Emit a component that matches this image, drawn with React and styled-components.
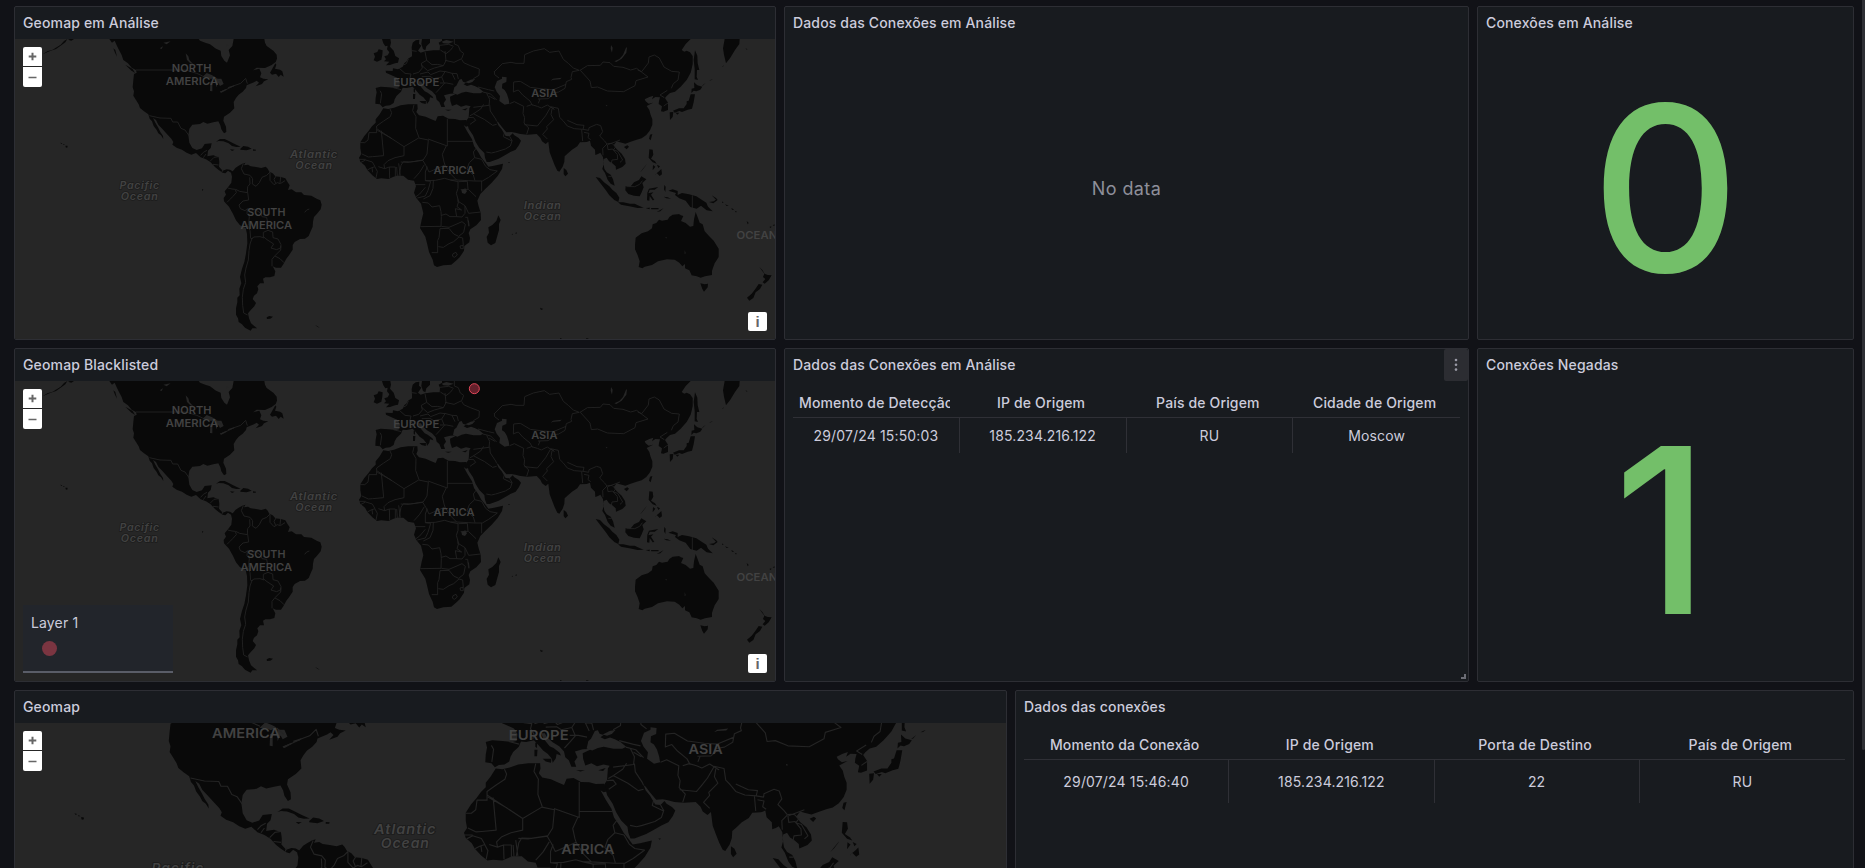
import React from "react";
import styled, { createGlobalStyle } from "styled-components";

const GlobalStyle = createGlobalStyle`
  * { box-sizing: border-box; }
  html, body { margin: 0; background: #111217; }
  body {
    font-family: Inter, "Liberation Sans", sans-serif;
    font-size: 14px;
    line-height: 22px;
    letter-spacing: 0.01071em;
    color: #ccccdc;
    overflow: hidden;
  }
`;

const Viewport = styled.main`
  display: grid;
  grid-template-columns: 1fr 3px;
  height: 868px;
  overflow: hidden;
`;

const Dashboard = styled.div`
  display: flex;
  flex-direction: column;
  gap: 8px;
  padding: 6px 8px 0 14px;
`;

const PanelRow = styled.section`
  display: grid;
  grid-template-columns: ${(p) => p.$columns};
  column-gap: 8px;
  height: 334px;
  flex: none;
`;

const ScrollThumb = styled.div`
  height: 750px;
  background: #2e2f34;
  border-radius: 0 0 3px 3px;
`;

const PanelFrame = styled.article`
  position: relative;
  display: flex;
  flex-direction: column;
  min-width: 0;
  background: #181b1f;
  border: 1px solid #2d2e34;
  border-radius: 2px;
  overflow: hidden;
`;

const PanelHeader = styled.header`
  display: flex;
  align-items: center;
  justify-content: space-between;
  height: 32px;
  flex: none;
  padding-left: 8px;
`;

const PanelTitle = styled.h2`
  margin: 0;
  font-size: 14px;
  font-weight: 500;
  line-height: 22px;
`;

const MenuButton = styled.button`
  display: grid;
  place-items: center;
  width: 24px;
  height: 32px;
  padding: 0;
  border: 0;
  border-radius: 2px;
  background: #2c2d32;
  color: #9a9aa6;
`;

const ResizeHandle = styled.span`
  position: absolute;
  right: 2px;
  bottom: 2px;
  width: 5px;
  height: 5px;
  border-right: 2px solid #6c6d75;
  border-bottom: 2px solid #6c6d75;
`;

const MapArea = styled.div`
  position: relative;
  height: 300px;
  background: #262626;
`;

const MapSvg = styled.svg`
  display: block;
  width: 100%;
  height: 300px;
`;

const ZoomControl = styled.div`
  position: absolute;
  top: 8px;
  left: 8px;
  display: grid;
  gap: 1px;
  width: 19px;
`;

const MapButton = styled.button`
  display: grid;
  place-items: center;
  width: 19px;
  height: ${(p) => p.$height || 19}px;
  padding: 0;
  border: 0;
  border-radius: ${(p) => p.$radius || "2px"};
  background: #fff;
  color: #666;
  font: 700 15px "Liberation Sans", Arial, sans-serif;
`;

const InfoControl = styled.div`
  position: absolute;
  right: 8px;
  bottom: 8px;
`;

const Legend = styled.div`
  position: absolute;
  left: 8px;
  bottom: 8px;
  width: 150px;
  height: 68px;
  padding: 7px 8px;
  background: #22252b;
  border-bottom: 2px solid #5a5d68;
`;

const LegendSwatch = styled.div`
  width: 15px;
  height: 15px;
  margin: 7px 0 0 11px;
  border-radius: 50%;
  background: #7b3541;
`;

const Centered = styled.div`
  display: flex;
  flex: 1;
  align-items: center;
  justify-content: center;
  min-height: 0;
`;

const NoData = styled.span`
  font-size: 18px;
  letter-spacing: 0.022em;
  color: #8e8f9a;
`;

const StatValue = styled.span`
  padding: 0 ${(p) => (p.$narrow ? 8 : 0)}px 2px 0;
  font-size: 230.8px;
  font-weight: 500;
  line-height: 1.2;
  letter-spacing: 0;
  color: #73bf69;
`;

const Table = styled.div`
  margin: 0 8px;
`;

const TableRow = styled.div`
  display: grid;
  grid-template-columns: repeat(4, 1fr);
  height: ${(p) => p.$height}px;
  border-bottom: ${(p) => (p.$head ? "1px solid #2f3036" : "0")};
`;

const HeadCell = styled.div`
  display: flex;
  align-items: center;
  min-width: 0;
  padding: 8px 10px 0 6px;
  font-weight: 500;
`;

const HeadLabel = styled.div`
  width: 100%;
  overflow: hidden;
  white-space: nowrap;
  text-align: ${(p) => (p.$long ? "left" : "center")};
`;

const Cell = styled.div`
  display: flex;
  align-items: center;
  justify-content: center;
  min-width: 0;
  border-right: 1px solid #2f3036;
  &:last-child { border-right: 0; }
`;

const LAND_WEST = [
  // North and Central America
  "M328,117 L336,128 L344,122 L350,136 L357,150 L365,165 L370,180 L384,190 L395,203 L408,210 L410,218 L402,222 L400,240 L398,262 L402,274 L400,287 L408,300 L416,313 L420,324 L432,334 L445,343 L449,356 L456,364 L461,378 L470,390 L475,400 L483,406 L490,417 L489,408 L481,396 L474,382 L466,368 L459,354 L468,360 L475,374 L488,388 L500,401 L514,416 L520,426 L517,434 L530,443 L546,449 L560,458 L574,464 L588,459 L602,472 L618,478 L632,487 L645,501 L656,510 L668,518 L676,520 L684,512 L693,518 L696,530 L700,515 L690,509 L680,508 L668,512 L657,500 L658,486 L656,472 L640,466 L622,469 L624,452 L632,444 L635,430 L614,432 L606,445 L590,450 L577,444 L568,428 L565,405 L568,386 L577,374 L600,372 L610,366 L622,371 L640,367 L655,364 L661,376 L664,388 L672,400 L679,396 L678,380 L670,362 L672,350 L690,338 L703,325 L701,306 L708,294 L716,284 L728,275 L738,264 L740,256 L762,247 L770,242 L777,248 L767,259 L786,252 L792,244 L805,238 L790,236 L780,232 L784,220 L778,206 L755,212 L742,226 L752,216 L770,203 L795,204 L815,195 L827,186 L831,176 L830,164 L820,152 L800,138 L795,128 L793,117 L701,117 L697,138 L686,150 L690,166 L681,188 L673,182 L664,168 L662,152 L648,146 L630,133 L618,129 L600,122 L596,117 Z",
  "M810,218 L816,208 L826,190 L829,194 L825,206 L840,209 L847,214 L851,230 L842,224 L836,231 L828,221 L816,224 Z",
  "M376,194 L388,201 L398,207 L405,219 L393,211 Z",
  "M128,163 L142,154 L158,149 L170,142 L182,134 L192,123 L202,117 L196,127 L184,136 L168,147 L150,153 Z M204,119 L210,117 L222,117 L214,122 Z",
  "M340,145 L346,150 L351,170 L344,156 Z",
  // Caribbean
  "M648,425 L660,417 L674,417 L688,424 L704,432 L722,440 L709,441 L696,438 L686,430 L670,424 L656,423 Z M721,446 L730,438 L744,440 L755,446 L740,451 L721,449 Z M690,448 L704,449 L696,453 Z M759,448 L768,449 L767,452 L759,452 Z",
  // South America
  "M696,530 L697,515 L707,503 L716,497 L727,491 L736,488 L732,496 L744,494 L752,499 L768,501 L784,504 L797,500 L802,505 L808,515 L818,520 L826,529 L842,531 L856,535 L862,545 L869,556 L864,570 L875,568 L888,577 L904,577 L912,585 L934,587 L950,596 L961,601 L965,614 L962,628 L951,641 L942,651 L939,665 L938,680 L932,694 L926,708 L915,716 L900,717 L884,726 L878,735 L878,749 L868,764 L859,776 L850,793 L843,803 L828,803 L818,799 L826,814 L823,828 L810,832 L796,832 L789,836 L792,850 L780,850 L772,859 L775,868 L771,880 L762,887 L758,897 L768,909 L763,919 L753,929 L744,940 L747,955 L753,970 L771,985 L757,985 L752,992 L735,983 L726,973 L716,966 L714,955 L708,944 L708,925 L712,907 L712,893 L719,886 L718,866 L724,850 L720,831 L726,806 L733,786 L738,760 L742,730 L741,702 L737,684 L720,676 L708,661 L698,640 L687,620 L672,604 L671,594 L678,584 L674,574 L684,562 L694,548 Z",
  "M800,952 L808,948 L819,950 L811,956 L801,957 Z M945,976 L952,978 L959,984 Z",
  "M196,437 L202,437 L203,442 L198,443 Z M181,428 L187,430 L184,432 Z M190,432 L195,435 L190,435 Z M606,567 L610,569 L607,573 Z",
];

const LAND_EAST = [
  // British Isles
  "M126,117 L130,130 L136,139 L143,137 L141,148 L148,157 L143,166 L133,169 L138,178 L132,184 L148,185 L138,196 L150,195 L165,190 L174,188 L177,175 L166,168 L161,152 L150,140 L153,128 L151,117 Z M101,181 L105,170 L101,160 L112,156 L116,148 L128,151 L127,164 L124,179 L111,185 Z",
  // Eurasia
  "M128,322 L120,313 L106,311 L107,293 L110,277 L107,264 L122,260 L145,262 L168,264 L178,262 L180,246 L172,233 L158,227 L138,218 L137,212 L158,213 L159,205 L174,208 L188,200 L193,190 L200,184 L204,176 L216,169 L216,157 L215,142 L218,128 L227,121 L238,119 L237,131 L244,137 L234,152 L242,158 L256,154 L280,151 L299,151 L300,137 L296,128 L306,122 L306,117 L1052,117 L1037,132 L1025,150 L1033,155 L1040,152 L1050,157 L1058,168 L1058,193 L1052,218 L1040,240 L1022,260 L1005,275 L990,279 L980,288 L975,294 L984,308 L984,330 L970,335 L963,334 L966,319 L956,312 L957,303 L960,292 L946,291 L936,298 L940,287 L928,291 L914,298 L917,304 L926,311 L939,308 L920,318 L928,330 L932,345 L937,358 L937,374 L930,391 L919,405 L905,415 L890,419 L872,425 L856,431 L840,427 L830,424 L821,436 L830,448 L845,461 L855,477 L857,491 L847,501 L835,506 L828,509 L827,499 L817,490 L807,484 L800,473 L791,477 L790,488 L793,506 L800,517 L812,524 L819,538 L824,557 L812,551 L803,539 L795,519 L787,507 L791,492 L789,471 L781,458 L774,462 L766,465 L765,449 L753,437 L750,422 L740,426 L720,427 L712,439 L696,449 L684,460 L674,469 L673,485 L668,500 L658,515 L652,512 L644,496 L637,478 L629,457 L625,425 L617,432 L606,424 L601,413 L590,402 L563,404 L541,402 L526,398 L514,396 L499,397 L484,379 L475,367 L470,363 L475,376 L485,388 L492,400 L497,408 L509,409 L518,400 L523,406 L536,414 L543,422 L537,435 L527,449 L511,456 L496,465 L476,476 L449,486 L440,486 L435,473 L433,459 L418,444 L407,426 L399,406 L386,386 L384,378 L379,363 L386,352 L388,325 L392,319 L378,316 L363,320 L350,313 L336,318 L331,303 L330,290 L352,280 L330,281 L312,286 L318,299 L311,309 L315,321 L304,321 L298,306 L290,299 L287,286 L276,274 L261,265 L248,253 L243,244 L234,244 L240,257 L254,274 L263,278 L277,289 L280,295 L270,292 L268,302 L261,312 L259,303 L250,292 L239,284 L228,271 L218,260 L200,264 L188,263 L183,275 L170,287 L164,298 L161,309 L150,316 L137,317 Z",
  "M246,117 L270,117 L270,128 L259,139 L256,151 L249,147 L244,131 Z",
  "M238,303 L258,303 L257,312 L245,309 Z M219,282 L226,282 L225,297 L219,297 Z M221,266 L225,266 L225,278 L221,275 Z M315,329 L335,329 L325,332 Z M366,329 L383,324 L377,331 Z",
  // Africa and Madagascar
  "M130,325 L145,327 L162,323 L182,316 L205,313 L232,313 L233,326 L229,336 L237,346 L257,350 L272,357 L287,363 L293,349 L309,347 L326,356 L345,357 L360,361 L379,360 L385,378 L378,380 L371,375 L383,397 L396,418 L402,438 L415,457 L424,473 L437,489 L445,500 L462,497 L489,491 L486,507 L473,528 L455,548 L435,568 L421,582 L412,602 L416,619 L422,638 L423,660 L409,676 L391,688 L386,699 L390,714 L388,727 L373,738 L372,752 L359,772 L348,782 L334,794 L310,796 L291,801 L282,796 L278,779 L267,756 L261,730 L256,710 L240,684 L245,659 L250,640 L243,611 L229,594 L222,578 L228,558 L222,542 L204,539 L190,527 L168,527 L145,537 L124,535 L111,537 L97,526 L82,510 L75,497 L61,485 L57,473 L64,462 L61,445 L61,427 L73,408 L85,394 L96,379 L107,368 L107,358 L118,344 Z",
  "M475,646 L482,660 L477,672 L477,690 L466,729 L453,736 L443,728 L440,711 L447,698 L445,682 L457,675 L469,663 Z",
  "M671,504 L679,510 L684,521 L676,529 L671,522 Z",
  // South-east Asia
  "M767,531 L780,534 L792,547 L808,559 L817,569 L829,579 L838,593 L835,606 L823,600 L808,586 L797,570 L783,552 Z M834,607 L850,607 L870,611 L884,611 L900,619 L911,623 L893,624 L868,619 L843,614 Z M857,558 L871,560 L882,547 L897,540 L904,529 L919,538 L907,549 L911,562 L905,577 L899,589 L882,587 L865,582 L856,571 Z",
  "M955,561 L944,569 L929,569 L925,580 L940,577 L933,584 L943,600 L938,601 L929,588 L928,602 L921,601 L922,578 L927,566 Z M917,624 L930,623 L928,628 Z M933,624 L956,624 L955,628 L934,628 Z M950,636 L970,625 L961,634 Z",
  "M928,448 L938,449 L940,464 L933,476 L945,484 L950,491 L938,487 L926,473 Z M951,494 L960,499 L955,504 Z M939,495 L946,500 L938,511 Z M946,523 L957,514 L964,507 L966,523 L959,528 L950,519 L944,526 Z M899,518 L918,495 L920,493 L909,508 Z M927,416 L930,404 L937,402 L932,421 Z M852,441 L862,436 L867,440 L860,448 Z M973,555 L977,560 L976,576 L972,568 Z M971,590 L983,592 L993,596 L979,595 Z",
  "M985,572 L998,568 L1013,573 L1013,585 L1026,579 L1047,583 L1069,589 L1086,600 L1099,608 L1104,620 L1118,634 L1100,631 L1083,617 L1070,626 L1051,621 L1037,602 L1018,595 L1005,585 L1008,579 Z M1107,606 L1122,604 L1130,596 L1132,601 L1120,610 Z M1115,586 L1128,594 L1133,600 L1126,597 Z M1146,604 L1151,608 L1147,609 Z M1155,613 L1166,617 L1160,618 Z M1174,624 L1183,629 L1176,629 Z M1184,632 L1192,636 L1187,637 Z M1220,663 L1226,669 L1223,673 Z M1288,681 L1294,679 L1293,684 Z M1298,676 L1304,673 L1303,678 Z",
  // Japan and the Russian Pacific coast
  "M989,337 L1000,336 L998,351 L990,360 Z M999,332 L1017,325 L1031,325 L1040,312 L1040,304 L1046,302 L1052,283 L1065,283 L1061,307 L1056,326 L1043,329 L1026,336 L1018,333 L1004,338 Z M1007,338 L1018,338 L1012,344 Z M1054,279 L1055,266 L1063,264 L1062,247 L1072,256 L1087,260 L1081,269 L1069,274 L1061,272 Z M1065,151 L1072,167 L1073,190 L1078,210 L1071,210 L1070,230 L1074,240 L1064,238 L1064,207 L1061,180 Z M1154,117 L1149,145 L1152,164 L1158,190 L1171,173 L1185,150 L1198,132 L1199,117 Z M1085,258 L1097,248 L1090,256 Z M1107,242 L1119,236 L1113,241 Z M1147,200 L1151,195 L1149,200 Z",
  // Oceania
  "M885,735 L887,713 L905,700 L924,694 L936,685 L938,673 L949,669 L957,659 L966,662 L983,659 L988,651 L998,644 L1013,643 L1030,648 L1023,663 L1037,669 L1050,680 L1060,678 L1062,658 L1067,636 L1073,652 L1079,668 L1088,673 L1094,694 L1107,708 L1121,722 L1136,746 L1136,771 L1124,790 L1116,812 L1116,825 L1095,829 L1082,833 L1070,829 L1055,826 L1048,811 L1035,805 L1035,792 L1027,799 L1018,788 L1004,779 L981,778 L954,784 L936,795 L914,800 L907,805 L896,801 L899,784 L893,766 L885,748 Z",
  "M1081,850 L1094,853 L1104,851 L1103,862 L1092,875 L1087,867 Z M1258,801 L1267,810 L1274,821 L1283,825 L1295,826 L1286,841 L1274,851 L1268,847 L1276,837 L1269,831 L1273,821 Z M1256,852 L1267,854 L1260,867 L1247,877 L1240,894 L1228,902 L1221,893 L1235,881 L1246,867 Z M600,923 L610,927 L603,930 Z M1015,642 L1022,645 L1014,646 Z",
  "M525,700 L530,697 L530,701 Z M515,703 L519,701 L517,705 Z M504,486 L510,486 L507,489 Z M1218,145 L1223,150 L1217,147 Z M660,1014 L667,1015 L660,1017 Z M738,1014 L747,1015 L740,1017 Z",
];

const WATER_WEST =
  "M606,232 L620,219 L635,225 L646,231 L633,237 L620,232 Z M631,246 L637,244 L637,274 L630,273 Z M648,236 L664,236 L671,252 L660,258 L655,249 L648,262 Z M659,275 L678,267 L681,269 L664,278 Z M683,262 L704,255 L700,260 L686,264 Z M557,160 L565,169 L568,180 L580,193 L571,190 L561,180 Z M490,128 L512,124 L500,133 Z M479,145 L489,139 L485,147 Z M678,135 L683,132 L686,136 L680,139 Z";

const WATER_EAST =
  "M339,279 L343,262 L349,257 L358,239 L365,237 L369,245 L378,248 L371,253 L381,258 L393,254 L404,258 L417,264 L430,275 L421,280 L401,280 L378,275 L365,278 L352,284 Z M376,247 L392,239 L406,236 L397,246 L386,250 Z M464,262 L471,243 L486,236 L486,230 L500,232 L499,246 L487,251 L486,265 L494,270 L501,282 L506,298 L508,311 L494,314 L478,303 L480,288 L470,275 Z M823,184 L838,177 L849,165 L858,143 L861,142 L859,158 L845,176 L829,186 Z M813,135 L818,143 L816,158 L812,146 Z M632,242 L639,236 L665,233 L660,238 L640,239 Z M305,125 L319,120 L341,125 L325,131 L310,130 Z M364,570 L376,565 L381,574 L375,582 L366,579 Z M383,659 L387,663 L389,681 L386,674 Z M351,588 L356,608 L353,606 Z M1034,750 L1037,760 L1034,762 Z M976,710 L982,714 L978,715 Z M797,314 L803,317 L799,319 Z";

const BORDERS_WEST =
  "M408,210 H557 L590,220 L608,228 M646,232 L662,246 M661,276 L684,266 L705,256 L722,250 L737,235 L742,251 M448,347 L480,354 L513,355 L518,366 L533,366 L543,385 L555,390 L567,407 M602,466 L610,457 L621,451 M610,473 L618,462 M630,484 L642,472 L656,470 M639,493 L656,495 M666,516 L669,507 M730,491 L724,506 L732,522 L750,526 L758,536 L757,552 L768,559 L778,548 L786,532 L800,526 L810,516 M810,517 L810,541 L822,554 L832,548 L841,551 L855,542 M828,528 L822,538 L827,550 M842,530 L840,549 M683,564 L696,567 L706,568 L709,578 L699,589 L690,598 L681,607 M707,568 L719,574 L742,578 L743,560 L750,552 L749,532 M743,577 L746,600 L729,603 L717,615 L721,626 L735,632 L742,626 L741,641 L748,650 L746,670 L741,684 M743,627 L765,628 L781,639 L786,650 L800,652 L803,668 M745,679 L750,691 L752,715 L757,716 L761,711 L780,710 L790,713 M790,715 L790,697 L804,691 L818,696 L819,713 L834,717 L843,734 L841,744 L830,749 L813,744 L821,732 L801,719 L790,710 M843,737 L842,750 L825,767 L816,778 L816,799 M825,768 L840,776 L852,788 M757,713 L750,732 L747,752 L745,780 L738,804 L734,825 L737,847 L730,868 L727,892 L728,916 L731,939 L743,945 M914,637 L920,630 L928,627";

const BORDERS_EAST =
  "M120,272 L125,281 L121,310 M160,263 L184,269 M178,205 L195,220 L213,222 L210,234 L218,246 L215,258 M205,177 L199,191 L190,195 M216,152 L230,154 M255,155 L260,181 L244,190 L247,204 L236,217 L219,222 M260,181 L276,194 L292,193 L310,197 L318,182 L315,153 M244,195 L263,212 L283,204 L310,197 M240,222 L264,216 L272,224 L300,213 L315,215 L305,231 L281,236 L270,229 L245,230 M305,231 L313,250 L300,265 L288,278 M340,253 L320,249 L300,249 M345,239 L336,220 L314,214 M336,220 L351,221 L355,237 M315,181 L342,187 L365,176 L371,160 L361,153 L355,137 L343,132 L343,117 M299,136 L326,133 L341,139 M301,150 L318,161 L331,151 L338,142 M365,178 L371,188 L391,197 L418,207 L417,226 L400,236 M414,261 L445,269 L463,273 M429,276 L452,282 L470,300 M440,280 L449,298 L447,316 L400,322 M447,288 L465,298 M449,314 L451,333 L467,357 L470,364 M389,348 L401,341 L422,327 L431,313 M400,341 L434,359 L458,376 L470,373 M385,353 L400,352 L407,361 L390,373 M493,399 L490,410 L516,423 L511,438 L496,447 L467,456 L454,459 L439,456 M509,409 L517,423 M509,311 L523,305 L551,319 L549,341 L554,353 L552,369 L566,384 L560,403 M553,374 L592,378 L605,362 L617,347 L632,321 L643,328 L622,315 L604,324 L592,319 L575,314 L560,319 M464,214 L487,191 L513,187 L528,190 L552,190 L554,164 L580,153 L613,146 L629,157 L657,153 L670,178 L685,190 L700,204 L718,211 L697,215 L693,232 L695,238 L679,245 L675,265 L656,276 L637,279 M463,213 L464,224 L477,234 M520,277 L521,246 L541,244 L571,262 L610,267 L640,269 L678,253 M521,275 L535,270 L548,285 L570,303 L577,316 M594,297 L625,296 L638,285 M595,310 L600,297 M632,320 L655,325 L659,352 L669,362 L682,378 L703,386 L729,388 L732,376 L711,374 L682,361 M636,326 L633,344 L641,359 L620,380 L622,387 L608,403 L622,417 M729,388 L746,391 L747,383 L770,373 L782,377 L788,395 L779,408 L793,422 L801,432 L788,445 L789,466 M725,389 L728,423 M732,397 L747,400 L744,413 L752,419 M720,211 L742,197 L781,196 L789,186 L810,188 L821,199 L849,202 L872,210 L890,205 L924,231 L888,242 L885,257 L851,275 L802,273 L773,261 L754,263 L750,243 L721,211 M893,210 L905,215 L925,189 L927,171 L943,165 L958,174 L972,201 L995,214 L1018,216 L1014,240 L1000,251 L994,265 M973,293 L960,285 L982,271 M971,318 L984,309 M802,431 L816,430 L827,441 L820,450 L833,454 L848,480 L840,487 M803,434 L822,427 L840,420 M802,434 L804,449 L818,447 L832,464 L833,478 L816,480 L814,490 M805,529 L815,529 M859,560 L884,560 L899,553 L907,542 M1057,586 V624 M150,327 L155,338 L151,350 L131,363 L110,378 L110,386 L192,440 L236,414 L265,420 L261,462 L249,481 L212,486 L190,485 L183,496 L177,528 M110,387 V398 L87,398 L84,420 L74,428 L60,428 M124,392 L131,467 L98,470 L85,471 L66,462 M112,391 L156,416 M192,441 V467 L165,473 M165,473 L144,482 L132,494 L134,506 M222,314 L218,332 L228,350 L227,385 L237,413 M290,362 M322,356 V438 L264,417 M322,424 H399 M319,437 L307,463 L312,486 L315,495 L281,510 L267,516 L258,497 L249,482 M315,495 L331,521 L350,540 L385,542 L405,543 L427,543 L446,532 L472,513 L450,509 L437,499 L425,478 L404,473 L388,488 L381,507 L400,525 L405,542 M404,473 L400,456 L409,444 M350,540 L331,540 L314,535 L286,541 L256,542 L256,516 L262,500 M256,542 L272,544 L264,571 L256,588 L232,594 M225,554 H256 M247,607 L265,609 L276,621 L299,617 L303,635 L304,650 L303,679 L241,680 M280,541 L279,565 L270,587 L250,597 M331,540 L354,545 L354,565 L349,580 L356,604 L351,620 L365,630 L346,626 L350,650 L330,650 L318,642 L304,646 M355,545 L382,544 L384,568 L362,569 M385,568 L408,590 M425,543 V574 M356,605 L375,617 L386,640 L422,636 M375,618 V640 L366,651 L350,650 M304,679 L327,682 L348,673 L366,665 L376,673 L371,697 L356,709 L341,702 L327,685 L300,686 L297,713 L293,722 V758 L275,758 M295,740 L310,742 L327,731 L341,725 L357,711 L368,714 L370,737 M376,652 L383,652 L386,679 M339,761 L348,757 L352,765 L343,772 L337,768 Z M360,738 L369,736 L370,746 L362,746 Z M57,478 L77,478 M63,487 L77,480 L97,486 L105,500 L93,504 L82,510 M96,503 L98,517 M105,501 L112,514 L108,534 M115,500 L134,506 L148,501 L149,534 M148,501 H166 V529 M170,501 L172,528 M176,490 L181,527 M182,486 L204,487 L249,480 M222,536 L239,517 L253,494 M228,590 L239,582 L256,562";

const CountryLabel = ({ x, y, width, children }) => (
  <text x={x} y={y} textLength={width} lengthAdjust="spacingAndGlyphs" textAnchor="middle"
    fontFamily="Inter, sans-serif" fontWeight="600" fontSize="31" fill="#424242">{children}</text>
);

const OceanLabel = ({ x, y, width, children }) => (
  <text x={x} y={y} textLength={width} lengthAdjust="spacingAndGlyphs" textAnchor="middle"
    fontFamily="Inter, sans-serif" fontStyle="italic" fontWeight="600" fontSize="31" letterSpacing="2"
    fill="#424242" stroke="#1b1b1b" strokeWidth="4" paintOrder="stroke">{children}</text>
);

const WorldMap = ({ viewBox, marker }) => (
  <MapSvg viewBox={viewBox} preserveAspectRatio="xMinYMin slice">
    <g fill="#090909">
      {LAND_WEST.map((d) => <path key={d} d={d} />)}
    </g>
    <path d={WATER_WEST} fill="#262626" />
    <path d={BORDERS_WEST} fill="none" stroke="#242424" strokeWidth="2.6" strokeLinejoin="round" />
    <g transform="translate(1020 0)">
      <g fill="#090909">
        {LAND_EAST.map((d) => <path key={d} d={d} />)}
      </g>
      <path d={WATER_EAST} fill="#262626" />
      <path d={BORDERS_EAST} fill="none" stroke="#242424" strokeWidth="2.6" strokeLinejoin="round" />
    </g>
    <CountryLabel x="575" y="217" width="119">NORTH</CountryLabel>
    <CountryLabel x="576" y="255" width="157">AMERICA</CountryLabel>
    <CountryLabel x="799" y="648" width="115">SOUTH</CountryLabel>
    <CountryLabel x="799" y="686" width="155">AMERICA</CountryLabel>
    <CountryLabel x="1249" y="259" width="138">EUROPE</CountryLabel>
    <CountryLabel x="1633" y="291" width="79">ASIA</CountryLabel>
    <CountryLabel x="1362" y="521" width="123">AFRICA</CountryLabel>
    <CountryLabel x="2288" y="718" width="157">OCEANIA</CountryLabel>
    <OceanLabel x="419" y="566" width="121">Pacific</OceanLabel>
    <OceanLabel x="419" y="600" width="113">Ocean</OceanLabel>
    <OceanLabel x="942" y="475" width="144">Atlantic</OceanLabel>
    <OceanLabel x="942" y="508" width="113">Ocean</OceanLabel>
    <OceanLabel x="1628" y="627" width="114">Indian</OceanLabel>
    <OceanLabel x="1628" y="660" width="113">Ocean</OceanLabel>
    {marker && <circle cx={marker.x} cy={marker.y} r="15" fill="#64202b" stroke="#e04759" strokeWidth="3" />}
  </MapSvg>
);

const Panel = ({ title, menu, children }) => (
  <PanelFrame>
    <PanelHeader>
      <PanelTitle>{title}</PanelTitle>
      {menu && (
        <MenuButton aria-label="Menu">
          <svg width="4" height="14" viewBox="0 0 4 14" fill="currentColor">
            <circle cx="2" cy="2" r="1.3" />
            <circle cx="2" cy="6.8" r="1.3" />
            <circle cx="2" cy="11.6" r="1.3" />
          </svg>
        </MenuButton>
      )}
    </PanelHeader>
    {children}
    {menu && <ResizeHandle />}
  </PanelFrame>
);

const GeomapPanel = ({ title, viewBox = "45 117 2280 900", marker, legend }) => (
  <Panel title={title}>
    <MapArea>
      <WorldMap viewBox={viewBox} marker={marker} />
      <ZoomControl>
        <MapButton $radius="2px 2px 0 0" aria-label="Zoom in">
          <svg width="9" height="9" viewBox="0 0 9 9" stroke="#666" strokeWidth="2"><path d="M4.5,0.7 V8.3 M0.7,4.5 H8.3" /></svg>
        </MapButton>
        <MapButton $height={20} $radius="0 0 2px 2px" aria-label="Zoom out">
          <svg width="9" height="9" viewBox="0 0 9 9" stroke="#666" strokeWidth="1.6"><path d="M0.5,4.5 H8.5" /></svg>
        </MapButton>
      </ZoomControl>
      {legend && (
        <Legend>
          {legend}
          <LegendSwatch />
        </Legend>
      )}
      <InfoControl><MapButton>i</MapButton></InfoControl>
    </MapArea>
  </Panel>
);

const StatPanel = ({ title, value }) => (
  <Panel title={title}>
    <Centered><StatValue $narrow={value === "1"}>{value}</StatValue></Centered>
  </Panel>
);

const TablePanel = ({ title, menu, rowHeight, columns, row }) => (
  <Panel title={title} menu={menu}>
    <Table>
      <TableRow $head $height={37}>
        {columns.map((c) => (
          <HeadCell key={c}><HeadLabel $long={c.length > 18}>{c}</HeadLabel></HeadCell>
        ))}
      </TableRow>
      <TableRow $height={rowHeight}>
        {row.map((c) => <Cell key={c}>{c}</Cell>)}
      </TableRow>
    </Table>
  </Panel>
);

export default function App() {
  return (
    <Viewport>
      <GlobalStyle />
      <Dashboard>
        <PanelRow $columns="762px 685px 377px">
          <GeomapPanel title="Geomap em Análise" />
          <Panel title="Dados das Conexões em Análise">
            <Centered><NoData>No data</NoData></Centered>
          </Panel>
          <StatPanel title="Conexões em Análise" value="0" />
        </PanelRow>
        <PanelRow $columns="762px 685px 377px">
          <GeomapPanel title="Geomap Blacklisted" marker={{ x: 1423, y: 140 }} legend="Layer 1" />
          <TablePanel
            title="Dados das Conexões em Análise"
            menu
            rowHeight={35}
            columns={["Momento de Detecção", "IP de Origem", "País de Origem", "Cidade de Origem"]}
            row={["29/07/24 15:50:03", "185.234.216.122", "RU", "Moscow"]}
          />
          <StatPanel title="Conexões Negadas" value="1" />
        </PanelRow>
        <PanelRow $columns="993px 839px">
          <GeomapPanel title="Geomap" viewBox="44.3 220.5 2280.7 690" />
          <TablePanel
            title="Dados das conexões"
            rowHeight={43}
            columns={["Momento da Conexão", "IP de Origem", "Porta de Destino", "País de Origem"]}
            row={["29/07/24 15:46:40", "185.234.216.122", "22", "RU"]}
          />
        </PanelRow>
      </Dashboard>
      <ScrollThumb />
    </Viewport>
  );
}
